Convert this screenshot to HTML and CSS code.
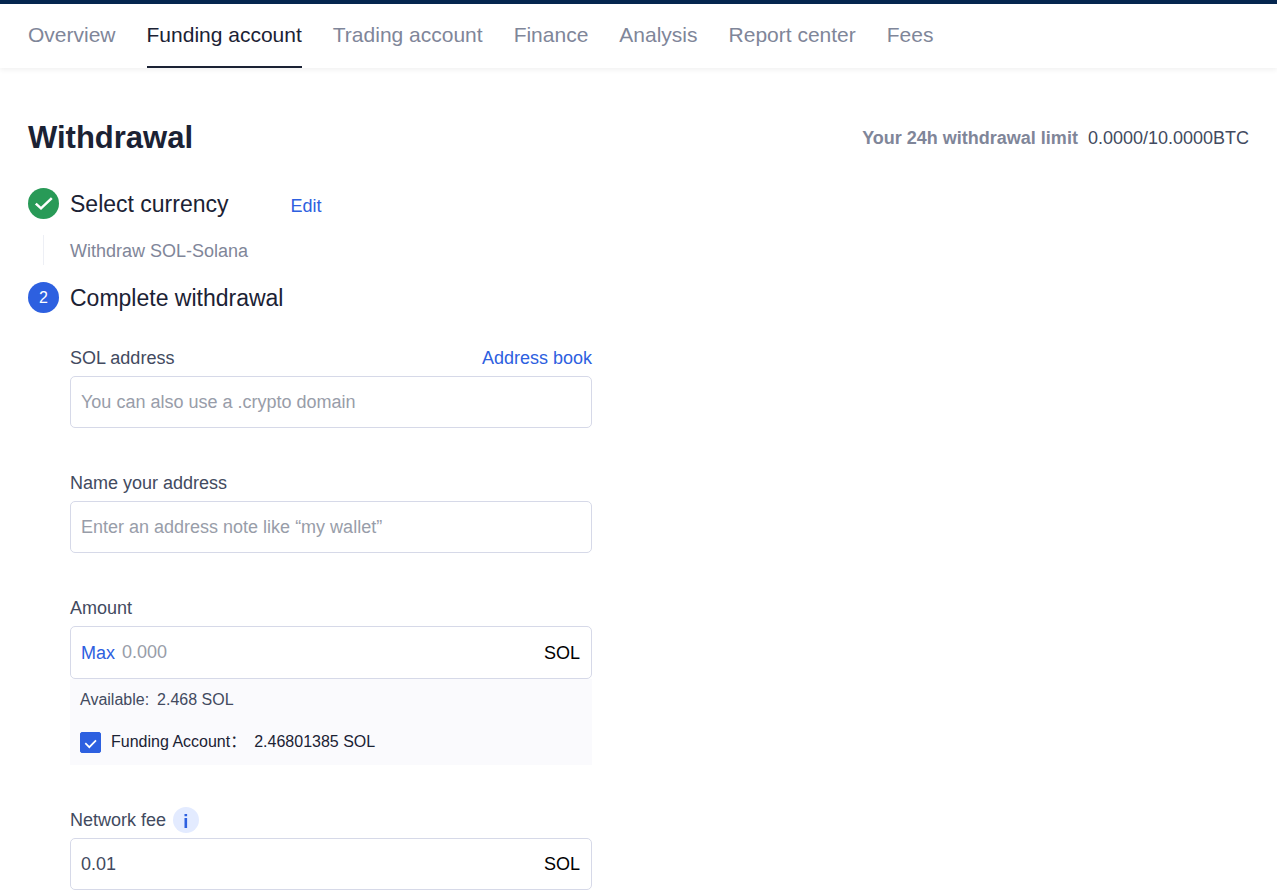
FILE: index.html
```html
<!DOCTYPE html>
<html lang="en">
<head>
<meta charset="utf-8">
<meta name="viewport" content="width=device-width, initial-scale=1">
<title>Withdrawal</title>
<link rel="stylesheet" href="styles.css">
</head>
<body>
<header class="site-header">
  <nav class="tabs" aria-label="Assets">
    <a class="tab" href="#overview">Overview</a>
    <a class="tab tab-active" href="#funding" aria-current="page">Funding account</a>
    <a class="tab" href="#trading">Trading account</a>
    <a class="tab" href="#finance">Finance</a>
    <a class="tab" href="#analysis">Analysis</a>
    <a class="tab" href="#report">Report center</a>
    <a class="tab" href="#fees">Fees</a>
  </nav>
</header>
<main class="page">
  <div class="page-head">
    <h1 class="title">Withdrawal</h1>
    <p class="limit"><strong class="limit-label">Your 24h withdrawal limit</strong><span>0.0000/10.0000BTC</span></p>
  </div>

  <section class="step">
    <span class="badge badge-done">
      <svg class="badge-icon" viewBox="0 0 31 31" aria-hidden="true"><path d="M7.8 15.6 L13 20.4 L23.8 10.2" fill="none" stroke="#fff" stroke-width="2.5"/></svg>
    </span>
    <div class="step-head">
      <h2 class="step-title">Select currency</h2>
      <a class="link" href="#edit">Edit</a>
    </div>
    <span class="connector"></span>
    <p class="step-note">Withdraw SOL-Solana</p>
  </section>

  <section class="step">
    <span class="badge badge-current">2</span>
    <h2 class="step-title">Complete withdrawal</h2>
    <form class="form">
      <div class="field">
        <div class="field-head">
          <label for="address">SOL address</label>
          <a class="link" href="#address-book">Address book</a>
        </div>
        <div class="box"><input class="input" id="address" type="text" placeholder="You can also use a .crypto domain"></div>
      </div>
      <div class="field">
        <div class="field-head"><label for="note">Name your address</label></div>
        <div class="box"><input class="input" id="note" type="text" placeholder="Enter an address note like “my wallet”"></div>
      </div>
      <div class="field">
        <div class="field-head"><label for="amount">Amount</label></div>
        <div class="box box-amount">
          <button class="max" type="button">Max</button>
          <input class="input" id="amount" type="text" placeholder="0.000">
          <span class="unit">SOL</span>
        </div>
        <div class="balance">
          <p class="available"><span>Available:</span><span>2.468 SOL</span></p>
          <div class="account">
            <input class="check" id="funding" type="checkbox" checked>
            <label class="account-name" for="funding">Funding Account：</label>
            <span>2.46801385 SOL</span>
          </div>
        </div>
      </div>
      <div class="field">
        <div class="field-head">
          <label for="fee">Network fee</label>
          <button class="info" type="button" aria-label="About the network fee">
            <svg class="info-icon" viewBox="0 0 26 26" aria-hidden="true"><path d="M11.5 7h2.6v2.2h-2.6zM11.5 11h2.6v10h-2.6z" fill="#2d60e0"/></svg>
          </button>
        </div>
        <div class="box">
          <input class="input" id="fee" type="text" value="0.01">
          <span class="unit">SOL</span>
        </div>
      </div>
    </form>
  </section>
</main>
</body>
</html>
```
FILE: styles.css
```css
* {
  box-sizing: border-box;
}

body {
  margin: 0;
  background: #fff;
  color: #1b2234;
  font-family: "Liberation Sans", Arial, "Noto Sans CJK SC", sans-serif;
  font-size: 18px;
  line-height: 24px;
}

h1, h2, p {
  margin: 0;
}

a {
  text-decoration: none;
}

button, input {
  font: inherit;
}

.site-header {
  border-top: 4px solid #05264f;
  box-shadow: 0 2px 5px rgba(0, 0, 0, 0.06);
}

.tabs {
  display: flex;
  gap: 31px;
  padding: 0 28px;
}

.tab {
  padding: 15px 0;
  border-bottom: 2px solid transparent;
  color: #7f8699;
  font-size: 21px;
  line-height: 32px;
}

.tab-active {
  border-color: #1b2234;
  color: #1b2234;
}

.page {
  padding: 50px 28px 2px;
}

.page-head {
  display: flex;
  align-items: center;
  justify-content: space-between;
  margin-bottom: 28px;
}

.title {
  font-size: 31px;
  line-height: 40px;
}

.limit {
  display: flex;
  gap: 10px;
  color: #424a60;
}

.limit-label {
  color: #7f8699;
}

.step {
  display: grid;
  grid-template-columns: 31px minmax(0, 1fr);
  column-gap: 11px;
}

.step + .step {
  margin-top: 15px;
}

.badge {
  display: flex;
  align-items: center;
  justify-content: center;
  width: 31px;
  height: 31px;
  margin-top: 2px;
  border-radius: 50%;
  color: #fff;
  font-size: 16px;
}

.badge-done {
  background: #289a57;
}

.badge-current {
  background: #2d60e0;
}

.badge-icon {
  width: 31px;
  height: 31px;
}

.step-head {
  display: flex;
  align-items: baseline;
  gap: 62px;
}

.step-title {
  font-size: 23px;
  font-weight: 400;
  line-height: 36px;
}

.link {
  color: #2d60e0;
}

.connector {
  justify-self: center;
  width: 1px;
  height: 30px;
  margin-top: 13px;
  background: #edeff5;
}

.step-note {
  margin-top: 17px;
  color: #7f8699;
}

.form {
  display: grid;
  grid-column: 2;
  gap: 42px;
  max-width: 522px;
  margin-top: 29px;
}

.field-head {
  display: flex;
  align-items: center;
  height: 31px;
  padding-bottom: 5px;
  color: #424a60;
}

.field-head .link {
  margin-left: auto;
}

.box {
  display: flex;
  align-items: center;
  height: 52px;
  padding: 0 11px 0 10px;
  border: 1px solid #d6d9e8;
  border-radius: 5px;
}

.box-amount {
  height: 53px;
}

.input {
  flex: 1;
  min-width: 0;
  height: 48px;
  padding: 0;
  border: 0;
  outline: 0;
  background: transparent;
  color: #424a60;
}

.input::placeholder {
  color: #989da9;
  opacity: 1;
}

.max {
  margin-right: 7px;
  padding: 0;
  border: 0;
  background: none;
  color: #2d60e0;
}

.unit {
  color: #000;
}

.balance {
  padding: 9px 10px 11px;
  background: #fafafd;
  font-size: 16px;
}

.available {
  display: flex;
  gap: 8px;
  color: #424a60;
}

.account {
  display: flex;
  align-items: center;
  margin-top: 18px;
}

.account-name {
  margin: 0 8px 0 10px;
}

.check {
  width: 21px;
  height: 21px;
  margin: 0;
  border-radius: 2px;
  appearance: none;
  border: 1px solid #2d60e0;
  background: #fff;
}

.check:checked {
  background: #2d60e0 url("data:image/svg+xml,%3Csvg xmlns='http://www.w3.org/2000/svg' viewBox='0 0 19 19'%3E%3Cpath d='M4.3 10.2l4 4L15 7.3' fill='none' stroke='%23fff' stroke-width='1.7'/%3E%3C/svg%3E") center / 19px 19px no-repeat;
}

.info {
  width: 26px;
  height: 26px;
  margin-left: 7px;
  padding: 0;
  border: 0;
  border-radius: 50%;
  background: #e3ebff;
}

.info-icon {
  display: block;
  width: 26px;
  height: 26px;
}
```
